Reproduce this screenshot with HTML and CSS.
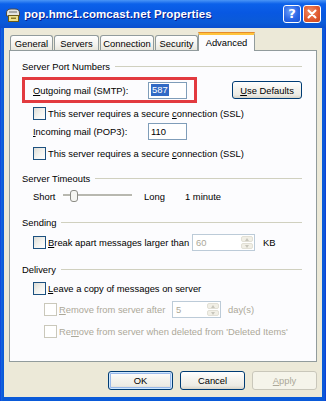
FILE: index.html
```html
<!DOCTYPE html>
<html>
<head>
<meta charset="utf-8">
<title>pop.hmc1.comcast.net Properties</title>
<link rel="stylesheet" href="styles.css">
</head>
<body>
<div class="window">
  <div class="titlebar">
    <svg class="app-icon" width="16" height="16" viewBox="0 0 16 16">
      <path d="M1.5 9 V6 Q1.5 2 6 2 H10 Q14.5 2 14.5 6 V9 Z" fill="#e4e4e0" stroke="#4a4a4a" stroke-width="1"/>
      <rect x="4" y="4" width="8" height="2" fill="#a8a8a4"/>
      <rect x="3.5" y="8.5" width="10" height="6" fill="#efe08a" stroke="#6a5a18" stroke-width="1"/>
      <rect x="6" y="10.5" width="5" height="1.5" fill="#8a7a28"/>
    </svg>
    <span class="title">pop.hmc1.comcast.net Properties</span>
    <div class="caption-buttons">
      <div class="cbtn help">?</div>
      <div class="cbtn close">
        <svg width="10" height="10" viewBox="0 0 10 10"><path d="M1.5 1.5 L8.5 8.5 M8.5 1.5 L1.5 8.5" stroke="#fff" stroke-width="2" stroke-linecap="round"/></svg>
      </div>
    </div>
  </div>
  <div class="client">
    <div class="tabs">
      <div class="tab t-general">General</div>
      <div class="tab t-servers">Servers</div>
      <div class="tab t-connection">Connection</div>
      <div class="tab t-security">Security</div>
      <div class="tab t-advanced selected">Advanced</div>
    </div>
    <div class="pane">
      <div class="group-head gh1"><span>Server Port Numbers</span><i></i></div>
      <div class="smtp-row">
        <div class="highlight-box">
          <span class="field-label"><u>O</u>utgoing mail (SMTP):</span>
          <div class="textbox port"><span class="sel">587</span></div>
        </div>
        <div class="button defaults"><u>U</u>se Defaults</div>
      </div>
      <div class="check-row ssl1"><span class="cb"></span><span class="cb-label">This server requires a secure <u>c</u>onnection (SSL)</span></div>
      <div class="field-row pop-row">
        <span class="field-label"><u>I</u>ncoming mail (POP3):</span>
        <div class="textbox port">110</div>
      </div>
      <div class="check-row ssl2"><span class="cb"></span><span class="cb-label">This server requires a secure <u>c</u>onnection (SSL)</span></div>

      <div class="group-head gh2"><span>Server Timeouts</span><i></i></div>
      <div class="slider-row">
        <span class="s-short">Short</span>
        <svg class="slider" width="72" height="14" viewBox="0 0 72 14">
          <rect x="1" y="5" width="69" height="2" fill="#b8b8b0"/>
          <rect x="1" y="7" width="69" height="1" fill="#ffffff"/>
          <rect x="8.5" y="1.5" width="7" height="11" rx="2.5" fill="#f6f6f2" stroke="#8c8c86" stroke-width="1"/>
        </svg>
        <span class="s-long">Long</span>
        <span>1 minute</span>
      </div>

      <div class="group-head gh3"><span>Sending</span><i></i></div>
      <div class="check-row break-row">
        <span class="cb"></span>
        <span class="cb-label break-label"><u>B</u>reak apart messages larger than</span>
        <div class="spin kb-spin disabled">
          <span class="spin-text">60</span>
          <span class="spin-btns"><span class="sb up"></span><span class="sb down"></span></span>
        </div>
        <span class="unit">KB</span>
      </div>

      <div class="group-head gh4"><span>Delivery</span><i></i></div>
      <div class="check-row leave-row"><span class="cb"></span><span class="cb-label"><u>L</u>eave a copy of messages on server</span></div>
      <div class="check-row sub-row remove-after disabled">
        <span class="cb"></span>
        <span class="cb-label after-label"><u>R</u>emove from server after</span>
        <div class="spin day-spin disabled">
          <span class="spin-text">5</span>
          <span class="spin-btns"><span class="sb up"></span><span class="sb down"></span></span>
        </div>
        <span class="unit days">day(s)</span>
      </div>
      <div class="check-row sub-row remove-deleted disabled"><span class="cb"></span><span class="cb-label">Re<u>m</u>ove from server when deleted from 'Deleted Items'</span></div>
    </div>
    <div class="dialog-buttons">
      <div class="button default">OK</div>
      <div class="button">Cancel</div>
      <div class="button disabled-btn"><u>A</u>pply</div>
    </div>
  </div>
</div>
</body>
</html>
```

FILE: styles.css
```css
* { box-sizing: border-box; }
html, body { margin: 0; padding: 0; }
body {
  width: 326px;
  height: 401px;
  overflow: hidden;
  background: #ffffff;
  font-family: "Liberation Sans", Arial, sans-serif;
  font-size: 9.4px;
  color: #000;
}
u { text-decoration: underline; text-underline-offset: 1px; }

.window {
  width: 326px;
  height: 401px;
  display: flex;
  flex-direction: column;
  background: linear-gradient(to right, #0831d9 0, #1665e0 1px, #0a5ad8 3px, #0a5ad8 323px, #1054d8 325px, #0831d9 326px);
  overflow: hidden;
}

.titlebar {
  height: 28px;
  flex: none;
  display: flex;
  align-items: center;
  padding-left: 5px;
  background: linear-gradient(to bottom, #4a95f6 0%, #0c61ea 14%, #0858e2 45%, #0a5ad8 80%, #0a4fcf 100%);
}
.app-icon { flex: none; margin-top: 1px; }
.title {
  margin-left: 3px;
  color: #fff;
  font-weight: bold;
  font-size: 11.5px;
  letter-spacing: 0.1px;
  text-shadow: 1px 1px 0 #0a1c8a;
}
.caption-buttons {
  margin-left: auto;
  display: flex;
  gap: 2px;
  padding-right: 5px;
  margin-top: -1px;
}
.cbtn {
  width: 18px;
  height: 18px;
  border: 1px solid #ffffff;
  border-radius: 3px;
  display: flex;
  align-items: center;
  justify-content: center;
  color: #fff;
}
.help {
  background: radial-gradient(circle at 40% 35%, #6f9ff8 0%, #2a66e6 55%, #1a52d2 100%);
  font-family: "DejaVu Sans", sans-serif;
  font-weight: bold;
  font-size: 13px;
}
.close {
  background: radial-gradient(circle at 40% 35%, #f0906a 0%, #e05a30 55%, #c8441e 100%);
}

.client {
  flex: 1;
  margin: 0 4px 4px 4px;
  background: #ece9d8;
  padding-top: 5px;
  display: flex;
  flex-direction: column;
}

.tabs {
  height: 17px;
  display: flex;
  align-items: flex-end;
  margin-left: 6px;
}
.tab {
  height: 15px;
  border: 1px solid #919b9c;
  border-bottom: none;
  border-radius: 3px 3px 0 0;
  background: linear-gradient(to bottom, #ffffff, #f4f3ee 60%, #e8e6dc);
  display: flex;
  align-items: center;
  justify-content: center;
  margin-right: 1px;
  padding-top: 1px;
}
.t-general { width: 43px; }
.t-servers { width: 45px; }
.t-connection { width: 54px; }
.t-security { width: 43px; margin-right: 0; }
.tab.selected {
  width: 57px;
  height: 19px;
  margin-bottom: -1px;
  position: relative;
  z-index: 1;
  background: #fcfcfe;
  border-top: 3px solid #ffc43c;
  padding-top: 0;
  padding-bottom: 2px;
}
.tab.selected::before {
  content: "";
  position: absolute;
  left: -1px;
  right: -1px;
  top: -3px;
  height: 1px;
  background: #e68b2c;
  border-radius: 3px 3px 0 0;
}

.pane {
  margin: 0 5px;
  height: 312px;
  flex: none;
  border: 1px solid #919b9c;
  background: #fcfcfe;
  padding: 0 14px 0 12px;
  display: flex;
  flex-direction: column;
}

.group-head {
  height: 14px;
  display: flex;
  align-items: center;
  flex: none;
}
.group-head i {
  flex: 1;
  height: 1px;
  background: #d0d0bf;
  margin-left: 5px;
  margin-top: 1px;
}
.gh1 { margin-top: 8px; }
.gh2 { margin-top: 11px; }
.gh3 { margin-top: 12px; }
.gh4 { margin-top: 11px; }

.smtp-row {
  margin-top: 4px;
  height: 26px;
  display: flex;
  align-items: center;
  justify-content: space-between;
  flex: none;
}
.highlight-box {
  width: 175px;
  height: 26px;
  border: 3px solid #e23a3f;
  display: flex;
  align-items: center;
  padding-left: 8px;
}
.field-label { width: 115px; flex: none; }
.textbox {
  height: 17px;
  border: 1px solid #7f9db9;
  background: #fff;
  display: flex;
  align-items: center;
  padding-left: 2px;
}
.port { width: 39px; }
.sel { background: #316ac5; color: #fff; padding: 0 1px; line-height: 12px; }

.button {
  height: 19px;
  width: 65px;
  border: 1px solid #003c74;
  border-radius: 3px;
  background: linear-gradient(to bottom, #ffffff 0%, #f5f4ef 40%, #ecebe5 80%, #d8d4c8 100%);
  display: flex;
  align-items: center;
  justify-content: center;
}
.defaults { width: 70px; height: 18px; }
.button.default { box-shadow: inset 0 0 0 1px #cee7ff, inset 0 0 0 2px #98b8ea; }
.button.disabled-btn {
  border-color: #c9c7ba;
  background: #f5f4ea;
  color: #aca899;
}

.check-row {
  height: 13px;
  display: flex;
  align-items: center;
  padding-left: 11px;
  flex: none;
}
.cb {
  width: 13px;
  height: 13px;
  flex: none;
  border: 1px solid #1c5180;
  background: linear-gradient(135deg, #dcdcd6 0%, #f2f2ee 50%, #ffffff 100%);
}
.cb-label { margin-left: 2px; }
.ssl1 { margin-top: 4px; }
.ssl2 { margin-top: 7px; }

.field-row {
  height: 17px;
  display: flex;
  align-items: center;
  padding-left: 11px;
  flex: none;
}
.pop-row { margin-top: 3px; }

.slider-row {
  margin-top: 4px;
  height: 14px;
  display: flex;
  align-items: center;
  padding-left: 11px;
  flex: none;
}
.s-short { width: 29px; }
.slider { flex: none; margin-right: 10px; }
.s-long { width: 41px; }

.break-row { margin-top: 5px; height: 17px; }
.break-label { width: 144px; flex: none; }
.spin {
  height: 17px;
  border: 1px solid #7f9db9;
  background: #fff;
  display: flex;
  align-items: stretch;
  flex: none;
}
.spin.disabled { border-color: #bccbd8; }
.spin-text {
  flex: 1;
  display: flex;
  align-items: center;
  padding-left: 3px;
  color: #aca899;
}
.spin-btns {
  width: 14px;
  display: flex;
  flex-direction: column;
  padding: 1px;
  gap: 1px;
}
.sb {
  flex: 1;
  border-radius: 2px;
  background: #f1efe6;
  border: 1px solid #e2e0d6;
  display: flex;
  align-items: center;
  justify-content: center;
}
.sb.up::after {
  content: "";
  border-left: 2.5px solid transparent;
  border-right: 2.5px solid transparent;
  border-bottom: 3px solid #c8c6bc;
}
.sb.down::after {
  content: "";
  border-left: 2.5px solid transparent;
  border-right: 2.5px solid transparent;
  border-top: 3px solid #c8c6bc;
}
.kb-spin { width: 63px; }
.unit { margin-left: 8px; }

.leave-row { margin-top: 6px; }
.sub-row { padding-left: 22px; }
.remove-after { margin-top: 6px; height: 17px; }
.remove-deleted { margin-top: 7px; }
.disabled .cb { border-color: #cac8bb; background: #ffffff; }
.check-row.disabled { color: #aca899; }
.after-label { width: 113px; flex: none; }
.day-spin { width: 49px; }
.days { margin-left: 7px; }

.dialog-buttons {
  margin-top: 9px;
  display: flex;
  justify-content: flex-end;
  gap: 7px;
  padding-right: 5px;
}
```
